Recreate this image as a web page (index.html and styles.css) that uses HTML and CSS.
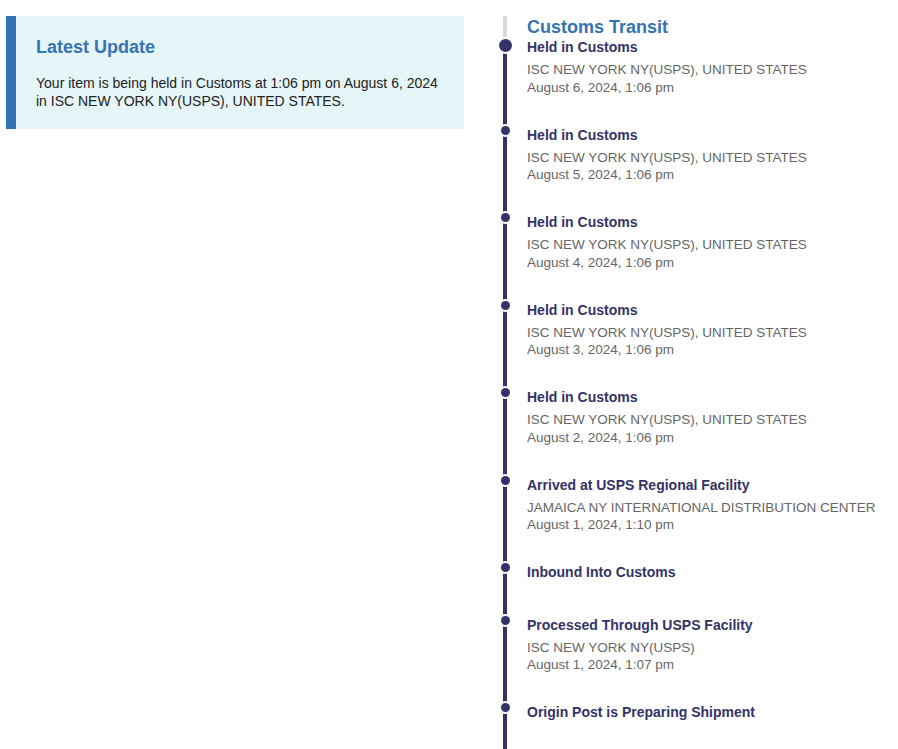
FILE: index.html
```html
<!DOCTYPE html>
<html>

<head>
  <meta charset="UTF-8">
  <title>Tracking Details</title>
  <link rel="stylesheet" href="styles.css">
</head>

<body>
  <div class="tracking">
    <!-- Latest status summary -->
    <div class="latest">
      <div class="latest-box">
        <h3>Latest Update</h3>
        <p>Your item is being held in Customs at 1:06 pm on August 6, 2024 in ISC NEW YORK NY(USPS), UNITED STATES.</p>
      </div>
    </div>

    <!-- Tracking history -->
    <div class="history">
      <h3 class="stage">Customs Transit</h3>
      <div class="events">
        <div class="event current">
          <span class="dot"></span>
          <div class="event-title">Held in Customs</div>
          <div class="event-info">ISC NEW YORK NY(USPS), UNITED STATES<br>August 6, 2024, 1:06 pm</div>
        </div>
        <div class="event">
          <span class="dot"></span>
          <div class="event-title">Held in Customs</div>
          <div class="event-info">ISC NEW YORK NY(USPS), UNITED STATES<br>August 5, 2024, 1:06 pm</div>
        </div>
        <div class="event">
          <span class="dot"></span>
          <div class="event-title">Held in Customs</div>
          <div class="event-info">ISC NEW YORK NY(USPS), UNITED STATES<br>August 4, 2024, 1:06 pm</div>
        </div>
        <div class="event">
          <span class="dot"></span>
          <div class="event-title">Held in Customs</div>
          <div class="event-info">ISC NEW YORK NY(USPS), UNITED STATES<br>August 3, 2024, 1:06 pm</div>
        </div>
        <div class="event">
          <span class="dot"></span>
          <div class="event-title">Held in Customs</div>
          <div class="event-info">ISC NEW YORK NY(USPS), UNITED STATES<br>August 2, 2024, 1:06 pm</div>
        </div>
        <div class="event">
          <span class="dot"></span>
          <div class="event-title">Arrived at USPS Regional Facility</div>
          <div class="event-info">JAMAICA NY INTERNATIONAL DISTRIBUTION CENTER<br>August 1, 2024, 1:10 pm</div>
        </div>
        <div class="event">
          <span class="dot"></span>
          <div class="event-title">Inbound Into Customs</div>
        </div>
        <div class="event">
          <span class="dot"></span>
          <div class="event-title">Processed Through USPS Facility</div>
          <div class="event-info">ISC NEW YORK NY(USPS)<br>August 1, 2024, 1:07 pm</div>
        </div>
        <div class="event">
          <span class="dot"></span>
          <div class="event-title">Origin Post is Preparing Shipment</div>
        </div>
      </div>
    </div>
  </div>
</body>

</html>
```

FILE: styles.css
```css
body {
  margin: 0;
  font-family: "Liberation Sans", Arial, sans-serif;
  background: #fff;
  overflow: hidden;
}

.tracking {
  display: flex;
  gap: 39px;
  padding: 16px 0 0 6px;
}

.latest {
  width: 458px;
  flex-shrink: 0;
}

.latest-box {
  background: #e5f5f8;
  border-left: 10px solid #3573b1;
  padding: 21px 14px 19px 20px;
}

.latest-box h3 {
  margin: 0 0 17px;
  font-size: 18px;
  line-height: 20px;
  color: #3573b1;
}

.latest-box p {
  margin: 0;
  font-size: 14px;
  line-height: 18px;
  color: #222;
}

.history {
  flex: 1;
}

.stage {
  margin: 0;
  padding: 1px 0 0 20px;
  border-left: 4px solid #d9d9d9;
  font-size: 18px;
  line-height: 21px;
  color: #3573b1;
}

.events {
  border-left: 4px solid #333366;
  padding-bottom: 40px;
}

.event {
  position: relative;
  padding: 0 0 29.5px 20px;
}

.dot {
  position: absolute;
  left: -6.5px;
  top: 0;
  width: 9px;
  height: 9px;
  border-radius: 50%;
  background: #333366;
  box-shadow: 0 0 0 2px #fff;
}

.current .dot {
  left: -8.5px;
  top: 1px;
  width: 13px;
  height: 13px;
}

.event-title {
  font-size: 14px;
  line-height: 18px;
  font-weight: bold;
  color: #333366;
  margin-bottom: 5px;
}

.event-info {
  font-size: 13.5px;
  line-height: 17.5px;
  color: #666;
}
```
